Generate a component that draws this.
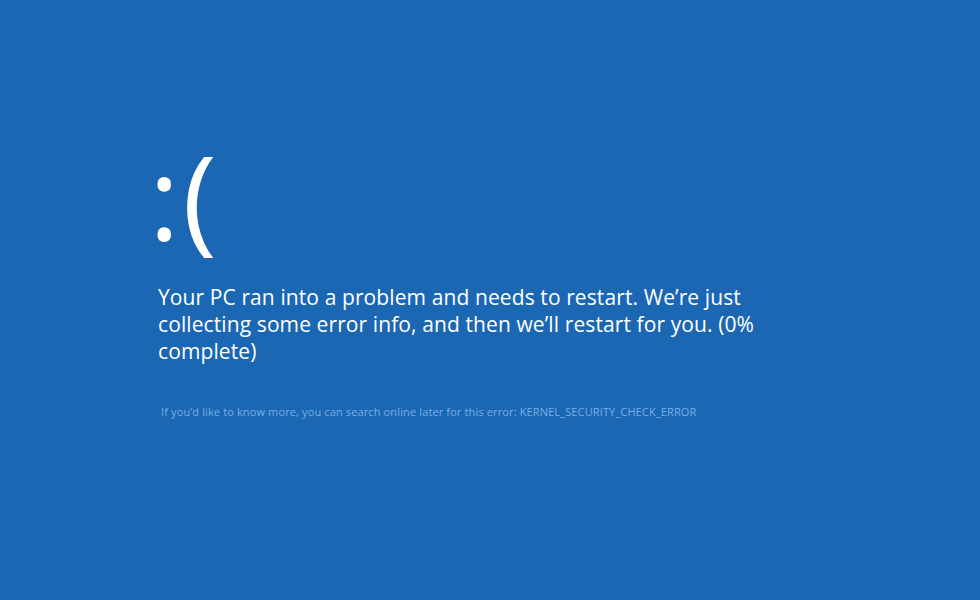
export default function App() {
  return (
    <div className="w-[980px] h-[600px] bg-[#1b67b3] overflow-hidden" style={{ fontFamily: '"Open Sans", "Noto Sans", sans-serif' }}>
      <div className="pl-[158px] pt-[128px]">
        <div className="text-white text-[116px] leading-[134px] font-normal tracking-[3px] ml-[-9px]">:(</div>
        <div className="mt-[22px] w-[600px] text-white text-[21px] leading-[27px] tracking-[0.1px]">
          Your PC ran into a problem and needs to restart. We’re just collecting some error info, and then we’ll restart for you. (0% complete)
        </div>
        <div className="mt-[40px] ml-[3px] text-[#78afe6] text-[11px] leading-[14px] tracking-[0.13px]">
          If you’d like to know more, you can search online later for this error: KERNEL_SECURITY_CHECK_ERROR
        </div>
      </div>
    </div>
  );
}
